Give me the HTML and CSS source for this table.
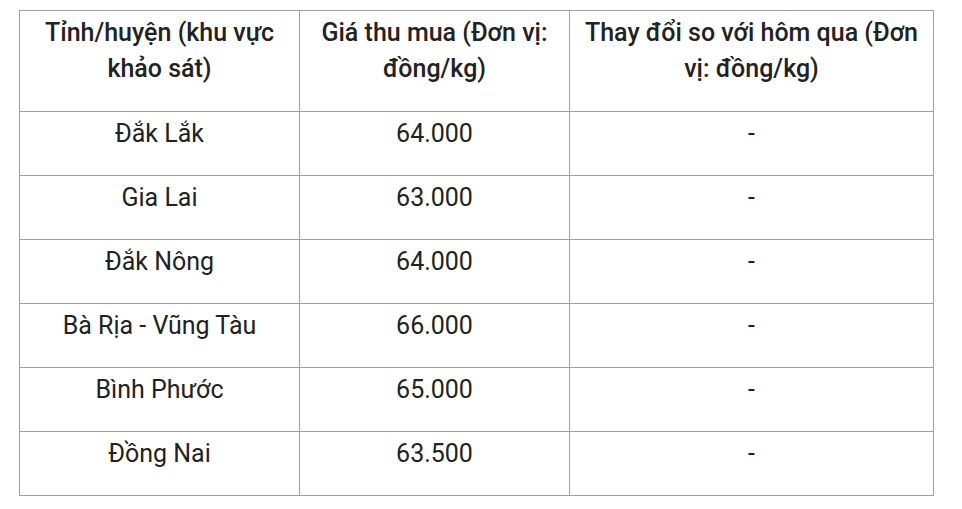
FILE: index.html
```html
<!DOCTYPE html>
<html lang="vi">
<head>
<meta charset="utf-8">
<link rel="stylesheet" href="styles.css">
</head>
<body>
<table class="price-table">
  <colgroup>
    <col class="col-a">
    <col class="col-b">
    <col class="col-c">
  </colgroup>
  <thead>
    <tr>
      <th><p>Tỉnh/huyện (khu vực khảo sát)</p></th>
      <th><p>Giá thu mua (Đơn vị: đồng/kg)</p></th>
      <th><p>Thay đổi so với hôm qua (Đơn vị: đồng/kg)</p></th>
    </tr>
  </thead>
  <tbody>
    <tr><td><p>Đắk Lắk</p></td><td><p>64.000</p></td><td><p>-</p></td></tr>
    <tr><td><p>Gia Lai</p></td><td><p>63.000</p></td><td><p>-</p></td></tr>
    <tr><td><p>Đắk Nông</p></td><td><p>64.000</p></td><td><p>-</p></td></tr>
    <tr><td><p>Bà Rịa - Vũng Tàu</p></td><td><p>66.000</p></td><td><p>-</p></td></tr>
    <tr><td><p>Bình Phước</p></td><td><p>65.000</p></td><td><p>-</p></td></tr>
    <tr><td><p>Đồng Nai</p></td><td><p>63.500</p></td><td><p>-</p></td></tr>
  </tbody>
</table>
</body>
</html>
```
FILE: styles.css
```css
html, body {
  margin: 0;
  background: #ffffff;
}
body {
  padding: 10px 0 0 19px;
  font-family: Roboto, "Liberation Sans", sans-serif;
  color: #222222;
}
.price-table {
  border-collapse: collapse;
  table-layout: fixed;
  width: 914px;
}
.col-a { width: 280px; }
.col-b { width: 270px; }
.col-c { width: 364px; }
.price-table th,
.price-table td {
  border: 1px solid #a0a0a0;
  padding: 4px 6px 3px;
  text-align: center;
  vertical-align: top;
  font-size: 25px;
  line-height: 36px;
}
.price-table th {
  font-weight: 500;
}
.price-table td {
  font-weight: 400;
}
.price-table p {
  margin: 0 0 20px;
}
.price-table th p {
  margin-bottom: 21px;
}
```
